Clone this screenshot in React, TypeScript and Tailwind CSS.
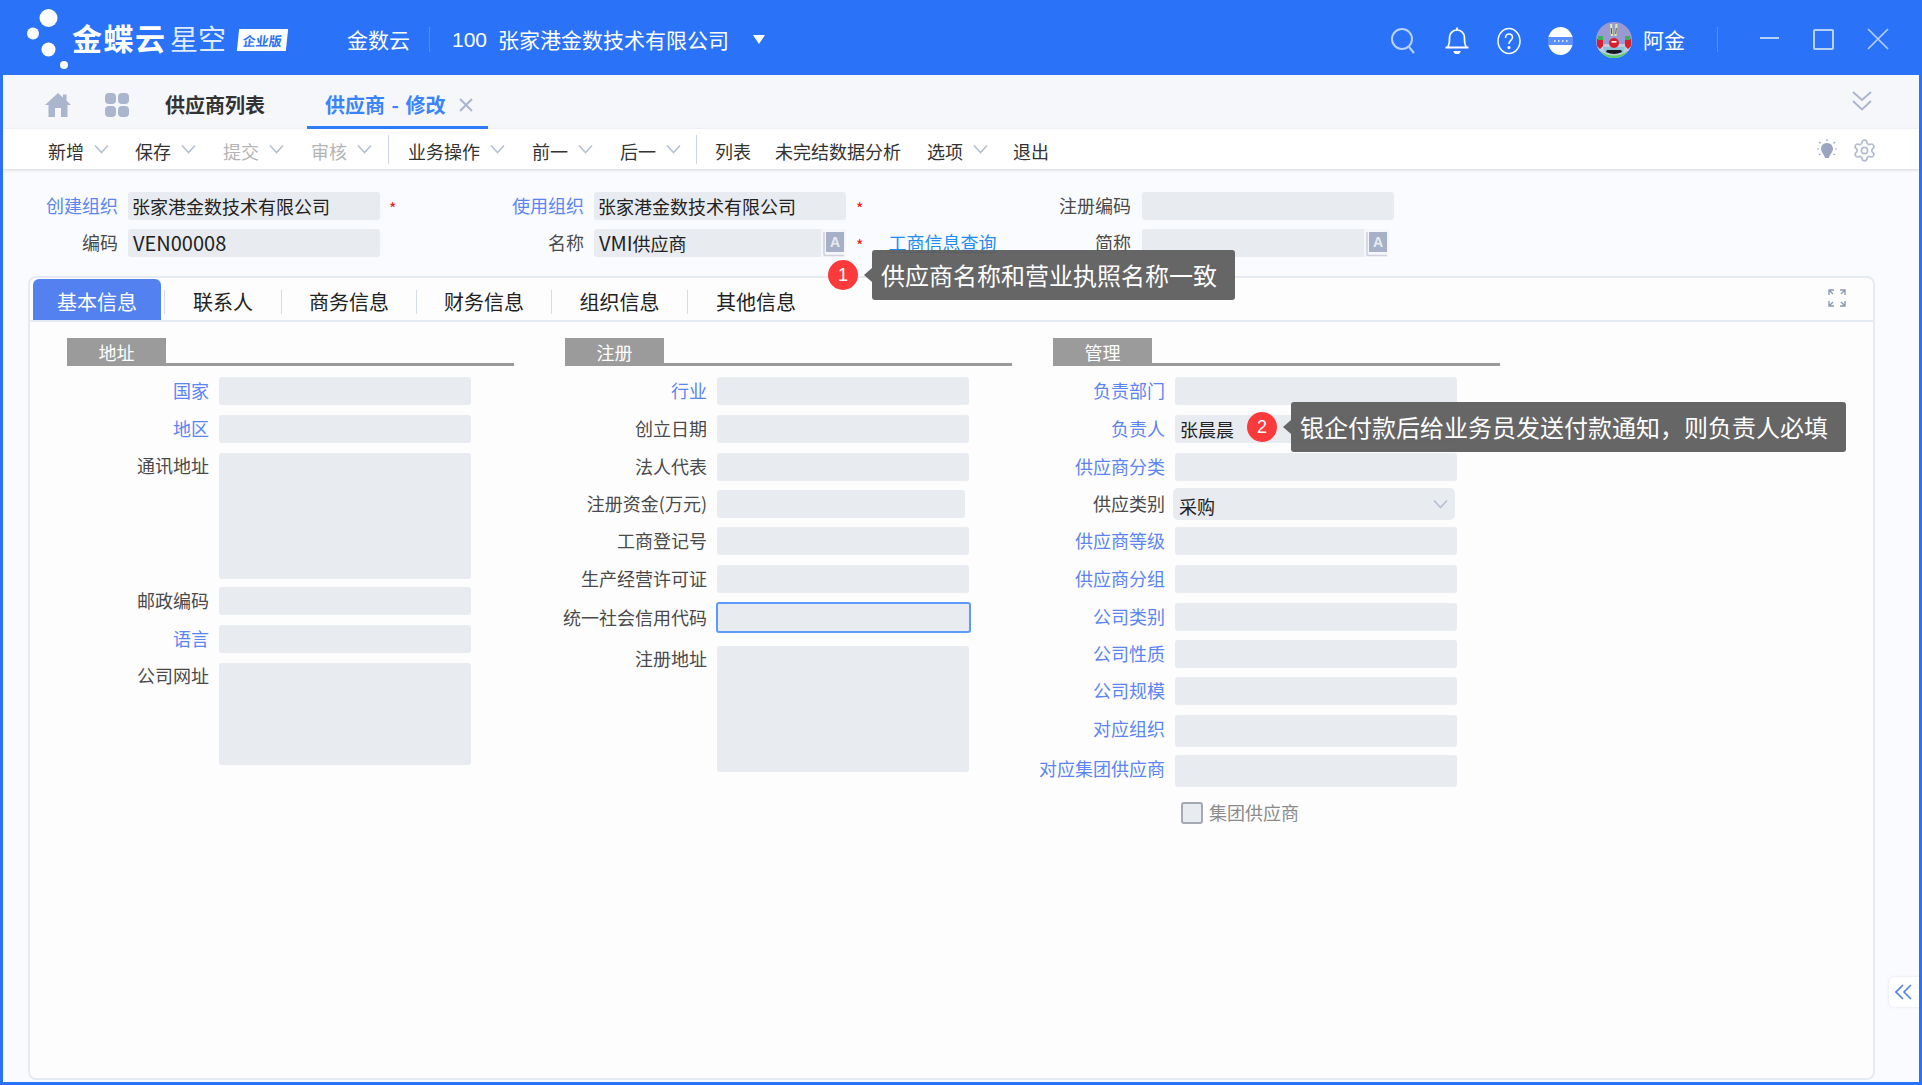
import { Settings } from "lucide-react";

const BLUE_LABEL = "text-[#5b85f2]";

// one chevron, used in the toolbar and the select
function Chevron({ className = "" }: { className?: string }) {
  return (
    <svg viewBox="0 0 15 10" className={`w-[15px] h-[10px] ${className}`} fill="none" stroke="#b6bfd3" strokeWidth="1.6">
      <path d="M1 1.5 L7.5 8.5 L14 1.5" />
    </svg>
  );
}

function ToolItem({ label, muted, gapClass, menu = true }: { label: string; muted?: boolean; gapClass: string; menu?: boolean }) {
  return (
    <div className={`flex items-center shrink-0 ${gapClass}`}>
      <span className={muted ? "text-[#b4b4b4]" : "text-[#333]"}>{label}</span>
      {menu && <Chevron className="ml-[10px] -mt-[3px]" />}
    </div>
  );
}

function Field({ label, blue, labelW, h = "h-[28px]", w = "w-[252px]", mt = "mt-[10px]", value }: {
  label: string; blue?: boolean; labelW: string; h?: string; w?: string; mt?: string; value?: string;
}) {
  const tall = h !== "h-[28px]" && h !== "h-[32px]";
  return (
    <div className={`flex ${tall ? "items-start" : "items-center"} ${mt}`}>
      <div className={`flex justify-end shrink-0 ${labelW} ${tall ? "pt-[3px]" : h === "h-[32px]" ? "pb-[7px]" : "pb-[2px]"}`}>
        <span className={`whitespace-nowrap shrink-0 ${blue ? BLUE_LABEL : "text-[#4a4a4a]"}`}>{label}</span>
      </div>
      <div className={`ml-[10px] ${w} ${h} bg-[#e8ebf0] rounded-[3px] px-[5px] pb-[1px] flex items-center text-[#222]`}>{value}</div>
    </div>
  );
}

function SectionHead({ title }: { title: string }) {
  return (
    <div className="flex items-end h-[28px] border-b-[3px] border-[#9b9b9b] w-[447px]">
      <div className="w-[99px] h-[28px] -mb-[3px] bg-[#9b9b9b] text-white pb-[1px] flex items-center justify-center">{title}</div>
    </div>
  );
}

function LangIcon() {
  return (
    <div className="absolute right-0 top-0 w-[25px] h-[28px] bg-[#f4f6fa] flex items-center justify-center">
      <svg viewBox="0 0 24 27" className="w-[24px] h-[27px]">
        <path d="M2 2 V24 Q2 25.5 4 25.5 H22" fill="none" stroke="#ccd3e0" strokeWidth="1.6" />
        <rect x="4" y="2" width="18" height="20" fill="#a6b1c8" />
        <text x="13" y="17" textAnchor="middle" fontSize="14" fontWeight="700" fill="#e8ebf0" fontFamily="Liberation Sans, sans-serif">A</text>
      </svg>
    </div>
  );
}

function Avatar() {
  return (
    <svg viewBox="0 0 36 36" className="w-[36px] h-[36px] ml-[23px] shrink-0">
      <defs><clipPath id="av"><circle cx="18" cy="18" r="18" /></clipPath></defs>
      <g clipPath="url(#av)">
        <rect width="36" height="36" fill="#9a9ad2" />
        <rect y="22" width="36" height="14" fill="#c3cbe0" />
        <path d="M4 29 Q18 38 32 29 L32 36 L4 36 Z" fill="#58cf68" />
        <path d="M7 25 H29 L27 31 H9 Z" fill="#8cc3d8" />
        <path d="M10 30 Q18 34 26 30 L25 28 H11 Z" fill="#17171d" />
        <path d="M15 2 L16 14 M20.5 2 L19.5 14" stroke="#dcecb0" strokeWidth="2.2" />
        <path d="M15.2 6 L15.8 12 M20.3 6 L19.7 12" stroke="#2a2a2a" strokeWidth="0.8" />
        <ellipse cx="18" cy="21" rx="5" ry="5" fill="#d8202c" />
        <rect x="15.5" y="19" width="5" height="1.6" fill="#fff" />
        <path d="M1 17 h6 v7 l-3 3 -3 -3z M29 17 h6 v7 l-3 3 -3 -3z" fill="#d8202c" />
        <path d="M2 14 h5 v4 h-5z M29 14 h5 v4 h-5z" fill="#3cae58" />
      </g>
    </svg>
  );
}

function Tooltip({ n, text, className }: { n: number; text: string; className: string }) {
  return (
    <div className={`absolute flex items-center ${className}`}>
      <div className="w-[30px] h-[30px] rounded-full bg-[#fb3a3c] text-white flex items-center justify-center text-[18px] font-['Liberation_Sans',sans-serif]">{n}</div>
      <div className="ml-[6px] w-0 h-0 border-y-[7px] border-y-transparent border-r-[8px] border-r-[#666]" />
      <div className="h-[50px] bg-[#5e5e5e]/95 rounded-[3px] text-white text-[24px] flex items-center">{text}</div>
    </div>
  );
}

const col1 = [
  { label: "国家", blue: true, mt: "mt-[11px]" },
  { label: "地区", blue: true },
  { label: "通讯地址", h: "h-[126px]" },
  { label: "邮政编码", mt: "mt-[8px]" },
  { label: "语言", blue: true },
  { label: "公司网址", h: "h-[102px]" },
];

const col3 = [
  { label: "负责部门", blue: true, mt: "mt-[11px]" },
  { label: "负责人", blue: true, value: "张晨晨" },
  { label: "供应商分类", blue: true },
  { label: "供应类别", select: true, h: "h-[32px]", mt: "mt-[7px]" },
  { label: "供应商等级", blue: true, mt: "mt-[7px]" },
  { label: "供应商分组", blue: true },
  { label: "公司类别", blue: true },
  { label: "公司性质", blue: true, mt: "mt-[9px]" },
  { label: "公司规模", blue: true, mt: "mt-[9px]" },
  { label: "对应组织", blue: true, h: "h-[32px]" },
  { label: "对应集团供应商", blue: true, h: "h-[32px]", mt: "mt-[8px]" },
];

export default function App() {
  return (
    <div className="relative w-[1922px] h-[1085px] overflow-hidden bg-[#2a72f8] flex flex-col font-['Noto_Sans_CJK_SC','Noto_Sans',sans-serif] text-[18px] leading-none">
      {/* title bar */}
      <header className="h-[75px] shrink-0 flex items-center pt-[4px] text-white text-[21px]">
        <svg viewBox="0 0 72 75" className="w-[72px] h-[75px] -mt-[4px] shrink-0">
          <circle cx="48.5" cy="18" r="9" fill="#fff" />
          <circle cx="33" cy="33.5" r="6" fill="#fff" />
          <circle cx="48.5" cy="49.5" r="7" fill="#fff" />
          <circle cx="64" cy="65" r="4" fill="#fff" />
        </svg>
        <span className="text-[30px] font-bold tracking-[1.5px] w-[98px] -mt-[5px] shrink-0">金蝶云</span>
        <span className="text-[28px] text-[#dfe9ff] w-[68px] -mt-[3px] shrink-0">星空</span>
        <span className="w-[49px] h-[22px] bg-white -skew-x-6 text-[#2a72f8] text-[13px] font-bold flex items-center justify-center shrink-0">企业版</span>
        <span className="ml-[60px] w-[82px] shrink-0">金数云</span>
        <span className="w-[1px] h-[25px] bg-[#6f86e8] shrink-0" />
        <span className="ml-[22px] font-['Liberation_Sans',sans-serif]">100</span>
        <span className="ml-[11px] w-[231px] shrink-0 whitespace-nowrap">张家港金数技术有限公司</span>
        <span className="ml-[24px] w-0 h-0 border-x-[6px] border-x-transparent border-t-[9px] border-t-white" />
        <svg viewBox="0 0 26 28" className="w-[26px] h-[28px] ml-[625px] mt-[2px] shrink-0" fill="none" stroke="#b9d2fd" strokeWidth="2">
          <circle cx="12" cy="12" r="10" />
          <path d="M19 20 L24 26" />
        </svg>
        <svg viewBox="0 0 26 30" className="w-[26px] h-[30px] ml-[28px] mt-[2px] shrink-0" fill="none" stroke="#fff" strokeWidth="1.7">
          <path d="M13 1.5 V4" />
          <path d="M4 21 C6 17 5.5 14 5.5 11.5 C5.5 7 9 4 13 4 C17 4 20.5 7 20.5 11.5 C20.5 14 20 17 22 21" />
          <path d="M1.5 21.5 H24.5" strokeWidth="2" />
          <path d="M9 25 H17 L15 28 H11 Z" fill="#fff" stroke="none" />
        </svg>
        <svg viewBox="0 0 24 28" className="w-[24px] h-[28px] ml-[27px] mt-[2px] shrink-0" fill="none" stroke="#fff" strokeWidth="1.5">
          <ellipse cx="12" cy="14" rx="11" ry="12.5" />
          <path d="M8.5 11 C8.5 8 10.5 7 12 7 C14 7 15.5 8.5 15.5 10.5 C15.5 13 12 13.5 12 17" />
          <circle cx="12" cy="20.5" r="0.8" fill="#fff" />
        </svg>
        <svg viewBox="0 0 25 28" className="w-[25px] h-[28px] ml-[27px] mt-[2px] shrink-0">
          <ellipse cx="12.5" cy="14" rx="12.5" ry="14" fill="#fff" />
          <rect x="0" y="10" width="25" height="8" fill="#5a8ef8" />
          <path d="M6 14 H7.5 M10 14 H11.5 M14 14 H15.5 M18 14 H19.5" stroke="#fff" strokeWidth="1.4" />
        </svg>
        <Avatar />
        <span className="ml-[11px] w-[74px] shrink-0">阿金</span>
        <span className="w-[1px] h-[25px] bg-[#6f86e8] shrink-0" />
        <span className="ml-[42px] w-[19px] h-[2px] bg-[#b9d2fd] -mt-[4px] shrink-0" />
        <span className="ml-[34px] w-[21px] h-[21px] border-2 border-[#b9d2fd] rounded-[2px] -mt-[1px] shrink-0" />
        <svg viewBox="0 0 22 22" className="w-[22px] h-[22px] ml-[33px] -mt-[1px] shrink-0" stroke="#b9d2fd" strokeWidth="1.6">
          <path d="M1 1 L21 21 M21 1 L1 21" />
        </svg>
      </header>

      {/* body */}
      <main className="relative flex-1 mx-[3px] mb-[3px] bg-[#f9fbfe] flex flex-col min-h-0">
        {/* page tabs */}
        <div className="relative h-[54px] shrink-0 bg-[#f5f7fb] flex items-center pt-[6px]">
          <svg viewBox="0 0 26 24" className="w-[26px] h-[24px] ml-[42px] shrink-0" fill="#aab6ce">
            <path d="M13 0 L18 4.6 V1.5 H21.5 V7.8 L26 12 H22.5 V24 H16 V15 H10 V24 H3.5 V12 H0 Z" />
          </svg>
          <div className="ml-[34px] grid grid-cols-2 gap-[2px] w-[24px] h-[24px] shrink-0">
            <span className="bg-[#aab6ce] rounded-[4px]" />
            <span className="bg-[#aab6ce] rounded-[4px]" />
            <span className="bg-[#aab6ce] rounded-[4px]" />
            <span className="bg-[#aab6ce] rounded-[4px]" />
          </div>
          <span className="ml-[36px] w-[142px] shrink-0 text-[20px] font-bold text-[#333]">供应商列表</span>
          <div className="h-[54px] -mt-[6px] w-[181px] shrink-0 border-b-[3px] border-[#2f7dfb] flex items-center pl-[18px] pt-[9px] text-[20px] font-bold text-[#3a84fb] whitespace-nowrap [word-spacing:2px]">
            供应商 - 修改
            <svg viewBox="0 0 14 14" className="w-[14px] h-[14px] ml-[14px] shrink-0" stroke="#a9b5cd" strokeWidth="2">
              <path d="M1 1 L13 13 M13 1 L1 13" />
            </svg>
          </div>
          <svg viewBox="0 0 20 20" className="absolute right-[47px] top-[16px] w-[20px] h-[20px]" fill="none" stroke="#a9b5cd" strokeWidth="1.8">
            <path d="M1 1 L10 9 L19 1 M1 10 L10 18.5 L19 10" />
          </svg>
        </div>

        {/* toolbar */}
        <div className="relative h-[40px] shrink-0 bg-white shadow-[0_1px_3px_rgba(100,110,130,0.25)] flex items-center pl-[45px] pt-[3px]">
          <ToolItem label="新增" gapClass="" />
          <ToolItem label="保存" gapClass="ml-[26px]" />
          <ToolItem label="提交" muted gapClass="ml-[27px]" />
          <ToolItem label="审核" muted gapClass="ml-[27px]" />
          <span className="ml-[16px] w-[1px] h-[29px] -mt-[3px] bg-[#cfd6e2] shrink-0" />
          <ToolItem label="业务操作" gapClass="ml-[19px]" />
          <ToolItem label="前一" gapClass="ml-[27px]" />
          <ToolItem label="后一" gapClass="ml-[27px]" />
          <span className="ml-[15px] w-[1px] h-[29px] -mt-[3px] bg-[#cfd6e2] shrink-0" />
          <ToolItem label="列表" menu={false} gapClass="ml-[18px]" />
          <ToolItem label="未完结数据分析" menu={false} gapClass="ml-[24px]" />
          <ToolItem label="选项" gapClass="ml-[26px]" />
          <ToolItem label="退出" menu={false} gapClass="ml-[25px]" />
          <svg viewBox="0 0 20 24" className="absolute left-[1814px] top-[10px] w-[20px] h-[24px]" fill="#9aa6bf">
            <path d="M10 4 C14 4 16 7 16 10 C16 13 13 15 12 19 H8 C7 15 4 13 4 10 C4 7 6 4 10 4 Z" />
            <path d="M10 0 V2 M2 3 L3.5 4.5 M18 3 L16.5 4.5 M0 10 H2 M18 10 H20 M2 16 L3.5 15 M18 16 L16.5 15" stroke="#9aa6bf" strokeWidth="1.2" />
          </svg>
          <Settings className="absolute left-[1849px] top-[9px] w-[25px] h-[25px] text-[#b3bcce]" strokeWidth={1.6} />
        </div>

        {/* header fields */}
        <div className="pt-[23px] shrink-0">
          <div className="flex items-center h-[28px]">
            <div className="flex items-center w-[466px]">
              <span className={`w-[115px] text-right -mt-[3px] ${BLUE_LABEL}`}>创建组织</span>
              <div className="ml-[10px] w-[252px] h-[28px] bg-[#e8ebf0] rounded-[3px] px-[4px] flex items-center text-[#222]">张家港金数技术有限公司</div>
              <span className="ml-[9px] text-[#f01818] text-[16px] pt-[3px]">*</span>
            </div>
            <div className="flex items-center w-[547px]">
              <span className={`w-[115px] text-right -mt-[3px] ${BLUE_LABEL}`}>使用组织</span>
              <div className="ml-[10px] w-[252px] h-[28px] bg-[#e8ebf0] rounded-[3px] px-[4px] flex items-center text-[#222]">张家港金数技术有限公司</div>
              <span className="ml-[10px] text-[#f01818] text-[16px] pt-[3px]">*</span>
            </div>
            <span className="w-[115px] text-right -mt-[3px] text-[#4a4a4a]">注册编码</span>
            <div className="ml-[11px] w-[252px] h-[28px] bg-[#e8ebf0] rounded-[3px]" />
          </div>
          <div className="flex items-center h-[28px] mt-[9px]">
            <div className="flex items-center w-[466px]">
              <span className="w-[115px] text-right -mt-[3px] text-[#4a4a4a]">编码</span>
              <div className="ml-[10px] w-[252px] h-[28px] bg-[#e8ebf0] rounded-[3px] px-[5px] flex items-center text-[#222] text-[20px]">VEN00008</div>
            </div>
            <div className="flex items-center w-[547px]">
              <span className="w-[115px] text-right -mt-[3px] text-[#4a4a4a]">名称</span>
              <div className="relative ml-[10px] w-[252px] h-[28px] bg-[#e8ebf0] rounded-[3px] px-[5px] flex items-center text-[#222]">
                <span className="text-[20px]">VMI</span>供应商
                <LangIcon />
              </div>
              <span className="ml-[10px] text-[#f01818] text-[16px] pt-[3px]">*</span>
              <span className="ml-[25px] -mt-[2px] text-[#1f8cf0] underline underline-offset-[2px] decoration-[#0d5fa8] whitespace-nowrap">工商信息查询</span>
            </div>
            <span className="w-[115px] text-right -mt-[3px] text-[#4a4a4a]">简称</span>
            <div className="relative ml-[11px] w-[247px] h-[28px] bg-[#e8ebf0] rounded-[3px]">
              <LangIcon />
            </div>
          </div>
        </div>

        {/* tab panel */}
        <section className="flex-1 min-h-0 ml-[25px] mr-[44px] mt-[19px] mb-[2px] border-2 border-[#e6ebf3] rounded-[8px] bg-[#fdfdfe] flex flex-col">
          <div className="relative h-[44px] shrink-0 border-b-2 border-[#e6ebf3] flex items-end pl-[3px] text-[20px] text-[#222] [&>div]:pt-[5px]">
            <div className="w-[128px] h-[41px] bg-[#5381f0] text-white rounded-t-[6px] flex items-center justify-center shrink-0">基本信息</div>
            <span className="ml-[3px] w-[1px] h-[24px] mb-[6px] bg-[#d5dce8] shrink-0" />
            <div className="w-[116px] h-[41px] flex items-center justify-center shrink-0">联系人</div>
            <span className="w-[1px] h-[24px] mb-[6px] bg-[#d5dce8] shrink-0" />
            <div className="w-[134px] h-[41px] flex items-center justify-center shrink-0">商务信息</div>
            <span className="w-[1px] h-[24px] mb-[6px] bg-[#d5dce8] shrink-0" />
            <div className="w-[134px] h-[41px] flex items-center justify-center shrink-0">财务信息</div>
            <span className="w-[1px] h-[24px] mb-[6px] bg-[#d5dce8] shrink-0" />
            <div className="w-[135px] h-[41px] flex items-center justify-center shrink-0">组织信息</div>
            <span className="w-[1px] h-[24px] mb-[6px] bg-[#d5dce8] shrink-0" />
            <div className="w-[136px] h-[41px] flex items-center justify-center shrink-0">其他信息</div>
            <svg viewBox="0 0 18 18" className="absolute left-[1798px] top-[11px] w-[18px] h-[18px]" fill="none" stroke="#8b99b5" strokeWidth="1.4">
              <path d="M1 6 V1 H6 M12 1 H17 V6 M17 12 V17 H12 M6 17 H1 V12 M1 1 L5 5 M17 1 L13 5 M17 17 L13 13 M1 17 L5 13" />
            </svg>
          </div>

          <div className="flex pl-[37px] pt-[16px]">
            <div className="w-[447px] shrink-0">
              <SectionHead title="地址" />
              {col1.map(f => <Field key={f.label} {...f} labelW="w-[142px]" />)}
            </div>
            <div className="w-[447px] ml-[51px] shrink-0">
              <SectionHead title="注册" />
              <Field label="行业" blue labelW="w-[142px]" mt="mt-[11px]" />
              <Field label="创立日期" labelW="w-[142px]" />
              <Field label="法人代表" labelW="w-[142px]" />
              <Field label="注册资金(万元)" labelW="w-[142px]" w="w-[248px]" mt="mt-[9px]" />
              <Field label="工商登记号" labelW="w-[142px]" mt="mt-[9px]" />
              <Field label="生产经营许可证" labelW="w-[142px]" />
              {/* focused input */}
              <div className="flex items-center mt-[9px]">
                <div className="flex justify-end w-[142px] pb-[2px] shrink-0">
                  <span className="whitespace-nowrap shrink-0 text-[#4a4a4a]">统一社会信用代码</span>
                </div>
                <div className="ml-[9px] w-[255px] h-[31px] bg-[#e8ebf0] rounded-[3px] border-2 border-[#5c9bfb]" />
              </div>
              <Field label="注册地址" labelW="w-[142px]" h="h-[126px]" mt="mt-[13px]" />
            </div>
            <div className="w-[447px] ml-[41px] shrink-0">
              <SectionHead title="管理" />
              {col3.map(f => f.select ? (
                <div key={f.label} className={`flex items-center ${f.mt}`}>
                  <div className="flex justify-end w-[112px] pb-[2px] shrink-0">
                    <span className="whitespace-nowrap shrink-0 text-[#4a4a4a]">{f.label}</span>
                  </div>
                  <div className="ml-[8px] w-[282px] h-[32px] bg-[#e8ebf0] rounded-[5px] pl-[6px] pr-[7px] pt-[4px] flex items-center justify-between text-[#222]">
                    采购
                    <Chevron className="-mt-[4px]" />
                  </div>
                </div>
              ) : (
                <Field key={f.label} {...f} labelW="w-[112px]" w="w-[282px]" />
              ))}
              <div className="flex items-center mt-[15px] ml-[128px] text-[#8b8b8b]">
                <span className="w-[22px] h-[22px] border-2 border-[#a5a9b2] bg-[#e8ebf0] rounded-[3px] shrink-0" />
                <span className="ml-[6px] pb-[2px]">集团供应商</span>
              </div>
            </div>
          </div>
        </section>

        {/* side toggle */}
        <div className="absolute right-0 top-[902px] w-[30px] h-[30px] bg-white rounded-l-[6px] shadow-[0_0_3px_rgba(120,130,160,0.2)] flex items-center justify-center">
          <svg viewBox="0 0 18 16" className="w-[18px] h-[16px]" fill="none" stroke="#4f7df0" strokeWidth="1.6">
            <path d="M8 1 L1 8 L8 15 M16 1 L9 8 L16 15" />
          </svg>
        </div>
      </main>

      {/* guide tooltips */}
      <Tooltip n={1} text="供应商名称和营业执照名称一致" className="left-[828px] top-[250px] [&>div:last-child]:w-[363px] [&>div:last-child]:pl-[9px]" />
      <Tooltip n={2} text="银企付款后给业务员发送付款通知，则负责人必填" className="left-[1247px] top-[402px] [&>div:last-child]:w-[555px] [&>div:last-child]:pl-[9px]" />
    </div>
  );
}
